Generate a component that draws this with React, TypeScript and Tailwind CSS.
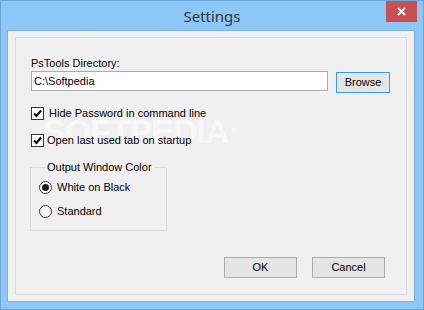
import React from 'react';

const font = { fontFamily: '"Liberation Sans", Arial, sans-serif' };

const CheckBox: React.FC<{ label: string; gap: string }> = ({ label, gap }) => (
    <div className="flex items-center h-[13px]">
        <div className="w-[13px] h-[13px] border border-[#333333] bg-white flex items-center justify-center shrink-0">
            <svg width="9" height="9" viewBox="0 0 9 9">
                <path d="M1 4.5 L3.5 7 L8 1.5" fill="none" stroke="#000" strokeWidth="2" />
            </svg>
        </div>
        <span className={`${gap} text-[11px] leading-[13px] text-black whitespace-nowrap`}>{label}</span>
    </div>
);

const Radio: React.FC<{ label: string; checked?: boolean }> = ({ label, checked }) => (
    <div className="flex items-center h-[13px]">
        <div className="w-[13px] h-[13px] rounded-full border border-[#333333] bg-white flex items-center justify-center shrink-0">
            {checked && <div className="w-[7px] h-[7px] rounded-full bg-[#1a1a1a]" />}
        </div>
        <span className="ml-[5px] text-[11px] leading-[13px] text-black whitespace-nowrap">{label}</span>
    </div>
);

const App: React.FC = () => {
    return (
        <div className="w-[424px] h-[310px] bg-[#8dc7f8] border border-[#6ea6da] flex flex-col relative overflow-hidden" style={font}>
            <div className="h-[29px] flex items-center justify-center">
                <span className="text-[15px] text-[#333333] pt-[1px]" style={{ fontFamily: '"Noto Sans", "Open Sans", sans-serif' }}>
                    Settings
                </span>
            </div>
            <div className="absolute top-0 right-[6px] w-[31px] h-[21px] bg-[#c75050] flex items-center justify-center">
                <svg width="9" height="9" viewBox="0 0 9 9">
                    <path d="M1 1 L8 8 M8 1 L1 8" stroke="#fff" strokeWidth="2" />
                </svg>
            </div>

            <div className="mx-[6px] w-[408px] h-[272px] border border-[#7aafe0] bg-[#f0f0f0] pl-[7px] pt-[6px]">
                <div className="relative w-[392px] h-[258px] border border-[#dcdcdc] flex flex-col pl-[15px]">
                    {/* faint watermark */}
                    <div className="absolute left-[27px] top-[76px] text-[34px] leading-[34px] font-bold tracking-[-1px] text-white/50 select-none pointer-events-none whitespace-nowrap">
                        SOFTPEDIA<span className="ml-[2px] text-[9px] align-top">®</span>
                    </div>

                    <div className="relative mt-[19px] text-[11px] leading-[13px] text-black">PsTools Directory:</div>

                    <div className="relative mt-[1px] flex items-start gap-[8px]">
                        <div className="w-[297px] h-[20px] border border-[#acacac] bg-white flex items-center pl-[2px] text-[11px] text-black">
                            C:\Softpedia
                        </div>
                        <div className="mt-[1px] w-[54px] h-[21px] border border-[#3399ff] bg-[#e6e6e6] flex items-center justify-center text-[11px] text-black">
                            Browse
                        </div>
                    </div>

                    <div className="relative mt-[14px]">
                        <CheckBox label="Hide Password in command line" gap="ml-[5px]" />
                    </div>
                    <div className="relative mt-[14px]">
                        <CheckBox label="Open last used tab on startup" gap="ml-[3px]" />
                    </div>

                    <fieldset className="relative mt-[14px] -ml-[1px] w-[137px] h-[70px] border border-[#dcdcdc] pl-[8px]">
                        <legend className="ml-[6px] px-[2px] text-[11px] leading-[13px] text-black">Output Window Color</legend>
                        <div className="mt-[7px]">
                            <Radio label="White on Black" checked />
                        </div>
                        <div className="mt-[11px]">
                            <Radio label="Standard" />
                        </div>
                    </fieldset>

                    <div className="mt-auto mb-[16px] pr-[21px] flex justify-end gap-[15px]">
                        <div className="w-[73px] h-[21px] border border-[#acacac] bg-[#e5e5e5] flex items-center justify-center text-[11px] text-black">
                            OK
                        </div>
                        <div className="w-[73px] h-[21px] border border-[#acacac] bg-[#e5e5e5] flex items-center justify-center text-[11px] text-black">
                            Cancel
                        </div>
                    </div>
                </div>
            </div>
        </div>
    );
};

export default App;
